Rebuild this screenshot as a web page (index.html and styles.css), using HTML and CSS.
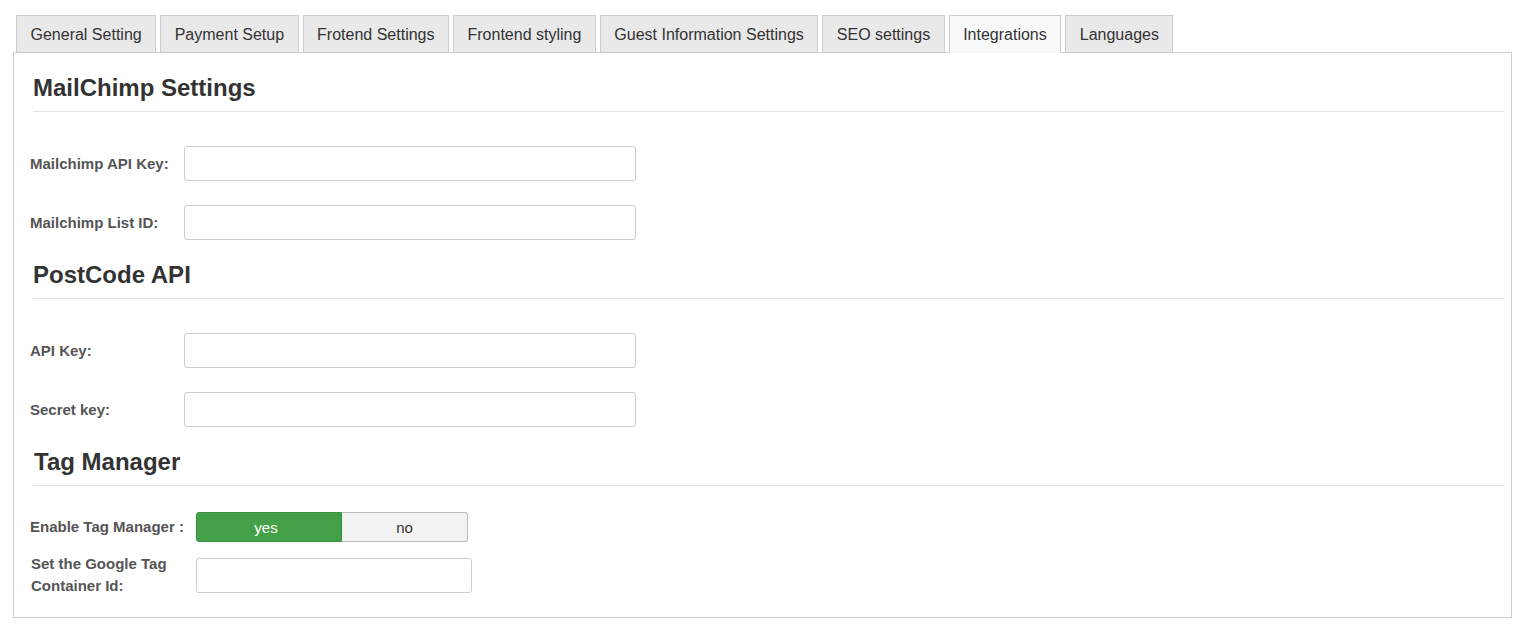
FILE: index.html
```html
<!DOCTYPE html>
<html>
<head>
<meta charset="utf-8">
<link rel="stylesheet" href="styles.css">
</head>
<body>
<div class="wrap">
  <ul class="tabs">
    <li class="tab">General Setting</li>
    <li class="tab">Payment Setup</li>
    <li class="tab">Frotend Settings</li>
    <li class="tab">Frontend styling</li>
    <li class="tab">Guest Information Settings</li>
    <li class="tab">SEO settings</li>
    <li class="tab active">Integrations</li>
    <li class="tab">Languages</li>
  </ul>
  <div class="panel">
    <section class="section">
      <h2 class="section-title">MailChimp Settings</h2>
      <div class="fields">
        <div class="row"><label class="label">Mailchimp API Key:</label><input class="input" type="text"></div>
        <div class="row"><label class="label">Mailchimp List ID:</label><input class="input" type="text"></div>
      </div>
    </section>
    <section class="section">
      <h2 class="section-title">PostCode API</h2>
      <div class="fields">
        <div class="row"><label class="label">API Key:</label><input class="input" type="text"></div>
        <div class="row"><label class="label">Secret key:</label><input class="input" type="text"></div>
      </div>
    </section>
    <section class="section last">
      <h2 class="section-title tag-title">Tag Manager</h2>
      <div class="fields tag-fields">
        <div class="row"><label class="label wide">Enable Tag Manager :</label>
          <div class="toggle"><span class="opt yes">yes</span><span class="opt no">no</span></div>
        </div>
        <div class="row"><label class="label wide two-line">Set the Google Tag Container Id:</label><input class="input short" type="text"></div>
      </div>
    </section>
  </div>
</div>
</body>
</html>
```

FILE: styles.css
```css
* { box-sizing: border-box; }
body {
  margin: 0;
  font-family: "Liberation Sans", Arial, sans-serif;
  color: #333;
  background: #fff;
}
.wrap {
  padding: 15px 15px 0 13px;
}
.tabs {
  list-style: none;
  margin: 0 0 -1px 0;
  padding: 0 0 0 3px;
  display: flex;
  gap: 4px;
  position: relative;
  z-index: 1;
}
.tab {
  height: 38px;
  padding: 1px 13.5px 0;
  border: 1px solid #ccc;
  background: #e9e9e9;
  font-size: 16px;
  line-height: 35px;
  color: #333;
}
.tab.active {
  background: #f9f9f9;
  border-bottom-color: #f9f9f9;
}
.panel {
  width: 1499px;
  border: 1px solid #ccc;
  padding: 21px 7px 20px 16px;
  background: #fff;
}
.section {
  margin-bottom: 21px;
}
.section.last { margin-bottom: 0; }
.section-title {
  margin: 0 0 34px 3px;
  font-size: 24px;
  line-height: 28px;
  font-weight: bold;
  color: #333;
  padding-bottom: 9px;
  border-bottom: 1px solid #e5e5e5;
}
.tag-title {
  padding-left: 1px;
  margin-bottom: 26px;
}
.fields {
  display: flex;
  flex-direction: column;
  gap: 24px;
}
.tag-fields { gap: 11px; }
.row {
  display: flex;
  align-items: center;
}
.label {
  width: 154px;
  font-size: 15px;
  font-weight: bold;
  color: #555;
  line-height: 22px;
}
.label.wide { width: 166px; }
.two-line { padding-left: 1px; padding-right: 18px; }
.input {
  width: 452px;
  height: 35px;
  border: 1px solid #ccc;
  border-radius: 3px;
  background: #fff;
  margin: 0;
}
.input.short { width: 276px; }
.toggle {
  display: flex;
  height: 30px;
}
.opt {
  display: flex;
  align-items: center;
  justify-content: center;
  font-size: 15px;
  height: 30px;
}
.yes {
  width: 146px;
  padding-right: 6px;
  background: #43a047;
  border: 1px solid #3a8f3e;
  color: #fff;
  border-radius: 3px 0 0 3px;
}
.no {
  width: 126px;
  background: #f2f2f2;
  border: 1px solid #bbb;
  border-left: none;
  color: #333;
  border-radius: 0 3px 3px 0;
}
```
